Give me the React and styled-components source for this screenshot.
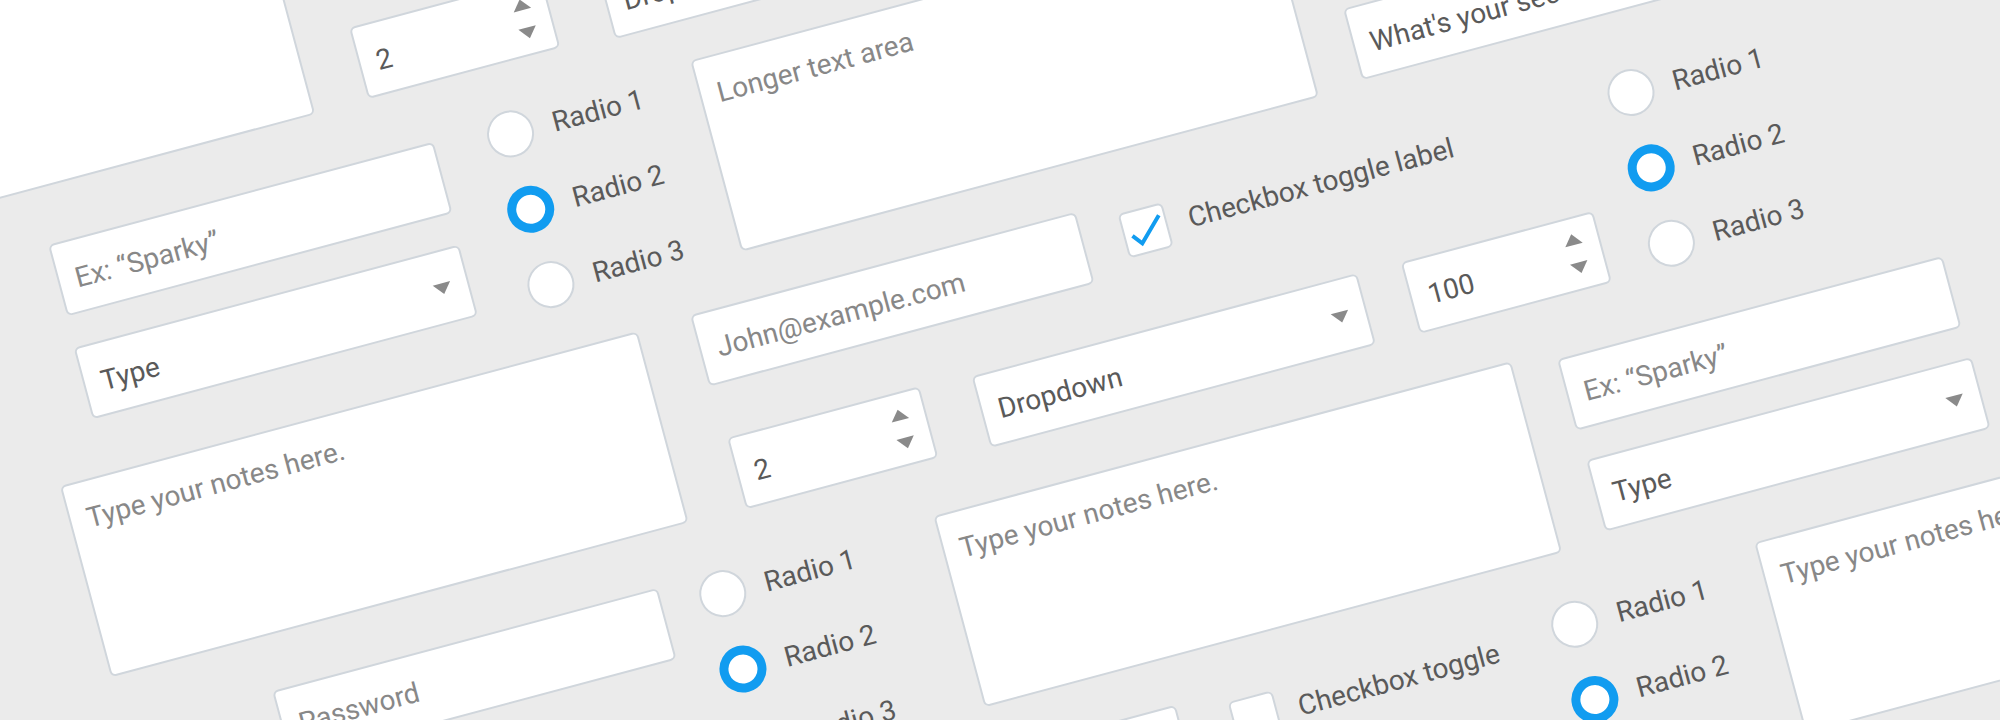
import React from "react";
import styled, { createGlobalStyle, css } from "styled-components";

const ANGLE = 15;
const COS = Math.cos((ANGLE * Math.PI) / 180);
const SIN = Math.sin((ANGLE * Math.PI) / 180);

const Global = createGlobalStyle`
  html, body { margin: 0; padding: 0; background: #ebebeb; }
  body { font-family: Roboto, "Liberation Sans", sans-serif; }
`;

/* $x / $y are the point on the tilted sheet where the part's top-left corner lands on screen */
const placed = css`
  position: absolute;
  left: ${(p) => p.$x * COS - p.$y * SIN}px;
  top: ${(p) => p.$x * SIN + p.$y * COS}px;
`;

const Stage = styled.main`
  position: relative;
  width: 2000px;
  height: 720px;
  overflow: hidden;
  background: #ebebeb;
`;

const Sheet = styled.div`
  position: absolute;
  left: 0;
  top: 0;
  width: 0;
  height: 0;
  transform-origin: 0 0;
  transform: rotate(-${ANGLE}deg);
`;

const fieldBox = css`
  ${placed}
  box-sizing: border-box;
  background: #fff;
  border: 2px solid #d0d6dc;
  border-radius: 6px;
  font-size: 28px;
  white-space: nowrap;
`;

const Field = styled.div`
  ${fieldBox}
  display: flex;
  align-items: center;
  justify-content: space-between;
  width: ${(p) => p.$w || 399}px;
  height: 74px;
  padding: 0 16px;
`;

const Placeholder = styled.span`
  color: #888;
  padding-top: ${(p) => (p.$area ? 0 : 4)}px;
`;

const Value = styled.span`
  color: #5a5a5a;
  padding-top: 4px;
`;

const TextArea = styled.div`
  ${fieldBox}
  width: 598px;
  height: 198px;
  padding: 20px 16px;
`;

const Triangle = styled.span`
  display: block;
  width: 0;
  height: 0;
  border-left: 9.5px solid transparent;
  border-right: 9.5px solid transparent;
  ${(p) =>
    p.$up
      ? "border-bottom: 11px solid #8a8a8a;"
      : "border-top: 11px solid #8a8a8a;"}
`;

const SelectArrow = styled(Triangle)`
  margin: 3px 0 0;
`;

const Stepper = styled.span`
  display: flex;
  flex-direction: column;
  gap: 18px;
`;

const RadioGroup = styled.div`
  ${placed}
  display: flex;
  flex-direction: column;
  gap: 32px;
`;

const RadioRow = styled.div`
  display: flex;
  align-items: center;
  gap: 20px;
  height: 46px;
`;

const RadioDot = styled.span`
  box-sizing: border-box;
  flex: none;
  width: 47px;
  height: 47px;
  border-radius: 50%;
  background: #fff;
  border: ${(p) => (p.$on ? "9.5px solid #119cf0" : "2px solid #d0d6dc")};
`;

const Label = styled.span`
  color: #5a5a5a;
  font-size: 28px;
  white-space: nowrap;
`;

const CheckRow = styled.div`
  ${placed}
  display: flex;
  align-items: center;
  gap: 22px;
  height: 46px;
`;

const CheckBox = styled.span`
  box-sizing: border-box;
  flex: none;
  width: 46px;
  height: 46px;
  background: #fff;
  border: 2px solid #d0d6dc;
  border-radius: 6px;
`;

const Tick = styled.svg`
  display: block;
  width: 42px;
  height: 42px;
  fill: none;
  stroke: #119cf0;
  stroke-width: 4;
`;

const Select = ({ x, y, label }) => (
  <Field $x={x} $y={y}>
    <Value>{label}</Value>
    <SelectArrow />
  </Field>
);

const TextInput = ({ x, y, label }) => (
  <Field $x={x} $y={y}>
    <Placeholder>{label}</Placeholder>
  </Field>
);

const NumberInput = ({ x, y, value }) => (
  <Field $x={x} $y={y} $w={199}>
    <Value>{value}</Value>
    <Stepper>
      <Triangle $up />
      <Triangle />
    </Stepper>
  </Field>
);

const Notes = ({ x, y, label = "Type your notes here." }) => (
  <TextArea $x={x} $y={y}>
    <Placeholder $area>{label}</Placeholder>
  </TextArea>
);

const Radios = ({ x, y }) => (
  <RadioGroup $x={x} $y={y}>
    <RadioRow>
      <RadioDot />
      <Label>Radio 1</Label>
    </RadioRow>
    <RadioRow>
      <RadioDot $on />
      <Label>Radio 2</Label>
    </RadioRow>
    <RadioRow>
      <RadioDot />
      <Label>Radio 3</Label>
    </RadioRow>
  </RadioGroup>
);

const Checkbox = ({ x, y, label, checked }) => (
  <CheckRow $x={x} $y={y}>
    <CheckBox>
      {checked && (
        <Tick viewBox="0 0 43 43">
          <path d="M7 23.5 L14.8 33.5 L38.5 10" />
        </Tick>
      )}
    </CheckBox>
    <Label>{label}</Label>
  </CheckRow>
);

export default function App() {
  return (
    <Stage>
      <Global />
      <Sheet>
        <Notes x={-313} y={78} />
        <NumberInput x={349} y={28} value="2" />
        <Select x={596} y={-32} label="Dropdown" />
        <Notes x={690} y={60} label="Longer text area" />
        <Select x={1343} y={9} label="What's your security question?" />
        <Radios x={482} y={118} />
        <Radios x={1602} y={76} />
        <TextInput x={48} y={245} label="Ex: “Sparky”" />
        <Select x={74} y={348} label="Type" />
        <TextInput x={690} y={315} label="John@example.com" />
        <Checkbox x={1117} y={214} label="Checkbox toggle label" checked />
        <NumberInput x={1401} y={262} value="100" />
        <TextInput x={1557} y={359} label="Ex: “Sparky”" />
        <Select x={971} y={376} label="Dropdown" />
        <Select x={1586} y={460} label="Type" />
        <NumberInput x={727} y={438} value="2" />
        <Notes x={60} y={486} />
        <Notes x={933} y={516} />
        <Notes x={1754} y={542} />
        <Radios x={694} y={578} />
        <Radios x={1546} y={608} />
        <TextInput x={272} y={691} label="Password" />
        <NumberInput x={983} y={756} value="2" />
        <Checkbox x={1227} y={702} label="Checkbox toggle" />
      </Sheet>
    </Stage>
  );
}
